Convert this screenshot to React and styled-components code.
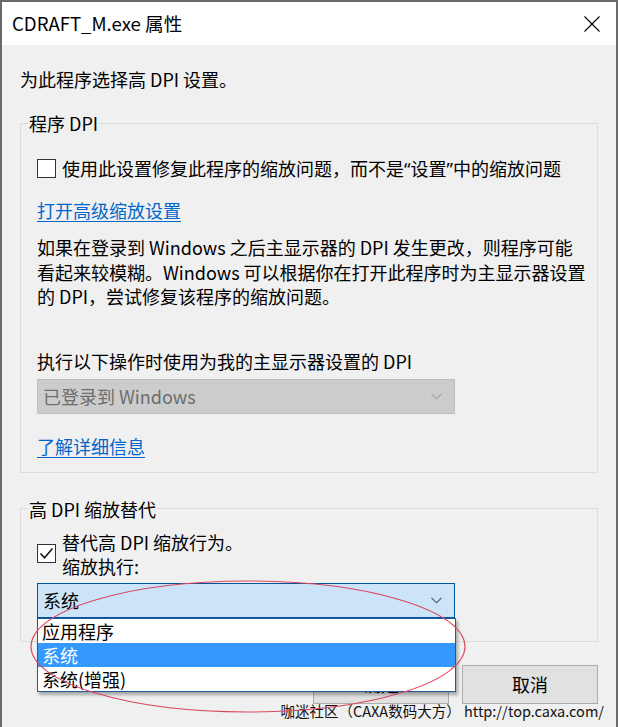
import React from "react";
import styled, { createGlobalStyle } from "styled-components";

const GlobalStyle = createGlobalStyle`
  html, body {
    margin: 0;
    padding: 0;
    background: #f0f0f0;
  }
  * {
    box-sizing: border-box;
  }
`;

const Window = styled.div`
  position: relative;
  width: 618px;
  height: 727px;
  border: 2px solid #6a6a6a;
  border-bottom: none;
  background: #f0f0f0;
  font-family: "Noto Sans CJK SC", "Noto Sans", sans-serif;
  font-size: 18px;
  line-height: 24px;
  color: #000;
  overflow: hidden;
`;

const TitleBar = styled.div`
  height: 43px;
  background: #fff;
  display: flex;
  align-items: center;
  justify-content: space-between;
  padding: 0 16px 0 10px;
`;

const Title = styled.div`
  font-size: 18.6px;
  padding-bottom: 2px;
`;

const Body = styled.div`
  padding: 22px 18px 0 18px;
`;

const Intro = styled.div`
  margin-bottom: 20px;
`;

const Group = styled.fieldset`
  margin: ${(p) => (p.$gap ? "24px 0 0 0" : "0")};
  padding: 0 16px ${(p) => p.$bottom}px 16px;
  border: 1px solid #dcdcdc;
  min-width: 0;
`;

const Legend = styled.legend`
  margin-left: -9px;
  padding: 0 1px;
  line-height: 24px;
`;

const CheckRow = styled.label`
  display: flex;
  align-items: center;
  gap: 6px;
  white-space: nowrap;
  margin-top: ${(p) => p.$top}px;
`;

const Quote = styled.span`
  font-family: "Noto Sans", sans-serif;
`;

const Box = styled.span`
  flex: none;
  width: 19px;
  height: 19px;
  border: 1px solid #333;
  background: #fff;
  display: flex;
  align-items: center;
  justify-content: center;
`;

const Link = styled.a`
  display: inline-block;
  color: #0066cc;
  text-decoration: underline;
  text-underline-offset: 3px;
  margin-top: ${(p) => p.$top}px;
`;

const Para = styled.p`
  margin: 13px 0 0 0;
  line-height: 24.5px;
  white-space: nowrap;
`;

const Label = styled.div`
  margin-top: 40px;
`;

const ComboWrap = styled.div`
  position: relative;
  width: 418px;
  margin-top: ${(p) => p.$top}px;
`;

const Combo = styled.div`
  height: 35px;
  display: flex;
  align-items: center;
  justify-content: space-between;
  padding: 0 12px 0 5px;
  background: ${(p) => (p.$disabled ? "#cccccc" : "#cce4f7")};
  border: 1px solid ${(p) => (p.$disabled ? "#bfbfbf" : "#005499")};
  color: ${(p) => (p.$disabled ? "#6d6d6d" : "#000")};
`;

const List = styled.ul`
  position: absolute;
  left: 0;
  top: 100%;
  width: 419px;
  margin: 0;
  padding: 0;
  list-style: none;
  background: #fff;
  border: 1px solid #1e5a9c;
  box-shadow: 2px 3px 3px rgba(0, 0, 0, 0.3);
  z-index: 2;
`;

const Item = styled.li`
  height: 24px;
  line-height: 24px;
  padding-left: 4px;
  background: ${(p) => (p.$active ? "#3399ff" : "transparent")};
  color: ${(p) => (p.$active ? "#fff" : "#000")};
`;

const Buttons = styled.div`
  display: flex;
  justify-content: flex-end;
  gap: 13px;
  margin-top: 23px;
`;

const Button = styled.button`
  width: 136px;
  height: 39px;
  background: #e1e1e1;
  border: 1px solid #adadad;
  font: inherit;
  color: #000;
`;

const Watermark = styled.div`
  position: absolute;
  right: 12px;
  bottom: 7px;
  font-size: 14.5px;
  line-height: 18px;
  color: #111;
  z-index: 3;
`;

const Ring = styled.svg`
  position: absolute;
  left: 27px;
  top: 577px;
  pointer-events: none;
  z-index: 4;
`;

const Chevron = ({ color }) => (
  <svg width="11" height="7" viewBox="0 0 11 7">
    <polyline points="0.5,0.8 5.5,5.8 10.5,0.8" fill="none" stroke={color} strokeWidth="1.1" />
  </svg>
);

const Close = () => (
  <svg width="16" height="16" viewBox="0 0 16 16">
    <path d="M0.5 0.5 L15.5 15.5 M15.5 0.5 L0.5 15.5" stroke="#000" strokeWidth="1.1" />
  </svg>
);

const Tick = () => (
  <svg width="15" height="13" viewBox="0 0 15 13">
    <polyline points="1.5,6.5 5.5,10.8 13.5,1.5" fill="none" stroke="#111" strokeWidth="1.5" />
  </svg>
);

export default function App() {
  return (
    <>
      <GlobalStyle />
      <Window>
        <TitleBar>
          <Title>CDRAFT_M.exe 属性</Title>
          <Close />
        </TitleBar>
        <Body>
          <Intro>为此程序选择高 DPI 设置。</Intro>

          <Group $bottom={14}>
            <Legend>程序 DPI</Legend>
            <CheckRow $top={21}>
              <Box />
              <span>
                使用此设置修复此程序的缩放问题，而不是<Quote>“</Quote>设置<Quote>”</Quote>中的缩放问题
              </span>
            </CheckRow>
            <Link $top={17}>打开高级缩放设置</Link>
            <Para>
              如果在登录到 Windows 之后主显示器的 DPI 发生更改，则程序可能
              <br />
              看起来较模糊。Windows 可以根据你在打开此程序时为主显示器设置
              <br />
              的 DPI，尝试修复该程序的缩放问题。
            </Para>
            <Label>执行以下操作时使用为我的主显示器设置的 DPI</Label>
            <ComboWrap $top={6}>
              <Combo $disabled>
                <span>已登录到 Windows</span>
                <Chevron color="#a3a3a3" />
              </Combo>
            </ComboWrap>
            <Link $top={20}>了解详细信息</Link>
          </Group>

          <Group $gap $bottom={23}>
            <Legend>高 DPI 缩放替代</Legend>
            <CheckRow $top={9}>
              <Box>
                <Tick />
              </Box>
              <span>
                替代高 DPI 缩放行为。
                <br />
                缩放执行:
              </span>
            </CheckRow>
            <ComboWrap $top={5}>
              <Combo>
                <span>系统</span>
                <Chevron color="#555" />
              </Combo>
              <List>
                <Item>应用程序</Item>
                <Item $active>系统</Item>
                <Item>系统(增强)</Item>
              </List>
            </ComboWrap>
          </Group>

          <Buttons>
            <Button>确定</Button>
            <Button>取消</Button>
          </Buttons>
        </Body>
        <Watermark>咖迷社区（CAXA数码大方） http://top.caxa.com/</Watermark>
        <Ring width="440" height="137" viewBox="0 0 440 137">
          <ellipse cx="219" cy="67.5" rx="217" ry="65.5" fill="none" stroke="#d9485e" strokeWidth="1.1" />
        </Ring>
      </Window>
    </>
  );
}
